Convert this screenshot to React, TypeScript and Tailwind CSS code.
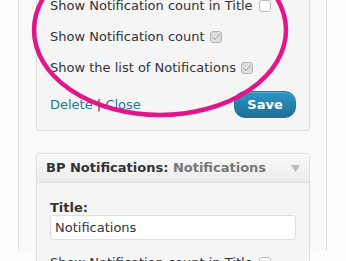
import React from "react";

const font = { fontFamily: '"DejaVu Sans", Verdana, sans-serif' };

function Check({ on }: { on?: boolean }) {
  if (!on) {
    return <span className="ml-[6px] inline-block w-[12px] h-[12px] rounded-[3px] border border-[#bbb] bg-white" />;
  }
  return (
    <svg className="ml-[5px]" width="12" height="12" viewBox="0 0 12 12">
      <rect x="0.5" y="0.5" width="11" height="11" rx="2.5" fill="#dcdcdc" stroke="#b4b4b4" />
      <path d="M2.5 5.8 L5 8.5 L9.8 2.8" fill="none" stroke="#fafafa" strokeWidth="2.4" />
      <path d="M2.5 5.8 L5 8.5 L9.8 2.8" fill="none" stroke="#9a9a9a" strokeWidth="1.1" />
    </svg>
  );
}

function Row({ label, on }: { label: string; on?: boolean }) {
  return (
    <div className="h-[31px] flex items-center text-[13px] text-[#333]">
      <span>{label}</span>
      <Check on={on} />
    </div>
  );
}

export default function App() {
  return (
    <div className="relative w-[346px] h-[261px] overflow-hidden bg-[#fcfcfc]" style={font}>
      <div className="ml-[18px] w-[309px] h-[261px] border-x border-[#dfdfdf] bg-[#f9f9f9] pl-[17px]">
        {/* widget 1, top cut off */}
        <div className="w-[274px] border-x border-b border-[#dfdfdf] rounded-b-[3px] bg-[#f5f5f5]">
          <div className="-mt-[10px] px-[13px] pb-[12px]">
            <Row label="Show Notification count in Title" />
            <Row label="Show Notification count" on />
            <Row label="Show the list of Notifications" on />
            <div className="mt-[8px] flex items-center justify-between">
              <div className="text-[13px] text-[#21759b]">
                <span>Delete</span>
                <span className="text-[#333]"> | </span>
                <span>Close</span>
              </div>
              <button className="w-[62px] h-[27px] rounded-[11px] border border-[#21759b] bg-gradient-to-b from-[#2a98c8] to-[#1e6f94] text-white text-[13px] font-bold shadow-[inset_0_1px_0_rgba(120,200,230,0.5)]">
                Save
              </button>
            </div>
          </div>
        </div>

        {/* widget 2 */}
        <div className="mt-[22px] w-[274px] border border-[#dfdfdf] rounded-[3px] bg-[#f5f5f5]">
          <div className="h-[29px] flex items-center justify-between pl-[9px] pr-[9px] border-b border-[#dfdfdf] rounded-t-[3px] bg-gradient-to-b from-[#f9f9f9] to-[#ececec] text-[13px] font-bold">
            <span>
              <span className="text-[#333]">BP Notifications:</span>
              <span className="text-[#777]"> Notifications</span>
            </span>
            <svg width="9" height="7" viewBox="0 0 9 7">
              <path d="M0 0 H9 L4.5 7 Z" fill="#bbb" />
            </svg>
          </div>
          <div className="px-[13px] pt-[17px]">
            <div className="h-[15px] leading-[15px] text-[13px] font-bold text-[#333]">Title:</div>
            <div className="h-[25px] flex items-center rounded-[3px] border border-[#dfdfdf] bg-white px-[4px] text-[13px] text-[#333]">
              Notifications
            </div>
            <div className="mt-[7px]">
              <Row label="Show Notification count in Title" />
            </div>
          </div>
        </div>
      </div>

      <svg className="absolute left-0 top-0 pointer-events-none" width="346" height="261">
        <ellipse cx="160" cy="30" rx="126" ry="85" fill="none" stroke="#e2168b" strokeWidth="4.5" />
      </svg>
    </div>
  );
}
